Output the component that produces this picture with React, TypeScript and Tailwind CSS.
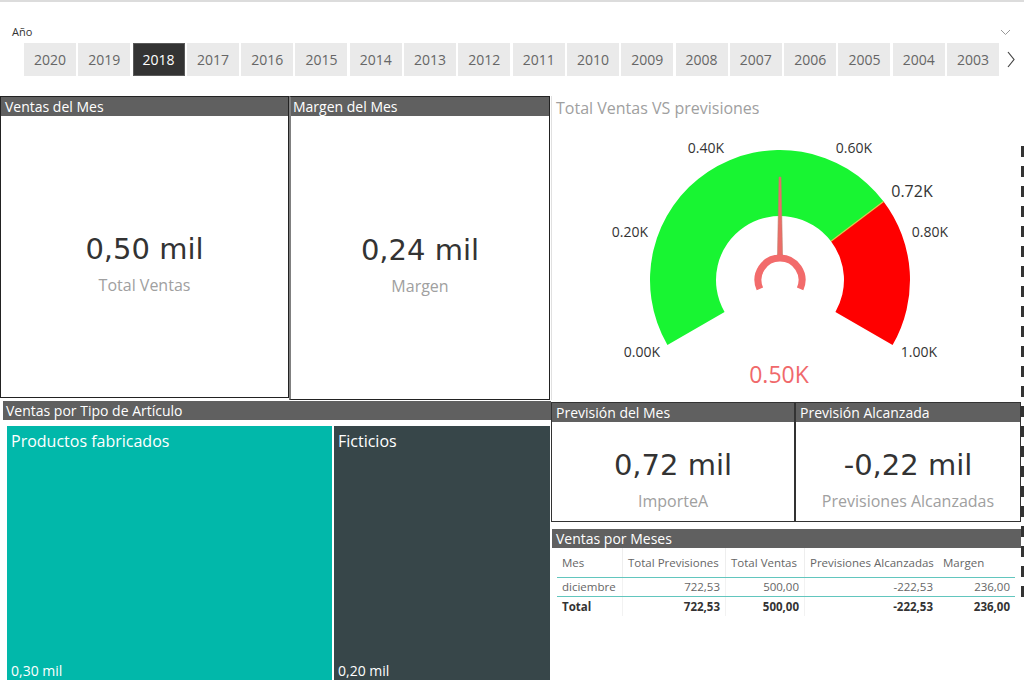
import React from 'react';

/* ─── Data ─────────────────────────────────────────────────────────────────── */
const YEARS = ['2020', '2019', '2018', '2017', '2016', '2015', '2014', '2013', '2012', '2011', '2010', '2009', '2008', '2007', '2006', '2005', '2004', '2003'];
const SELECTED = '2018';

const ROWS = [
  { mes: 'diciembre', prev: '722,53', ventas: '500,00', alc: '-222,53', margen: '236,00', bold: false },
  { mes: 'Total', prev: '722,53', ventas: '500,00', alc: '-222,53', margen: '236,00', bold: true },
];

/* ─── Gauge geometry (svg origin = page x 552, y 120) ──────────────────────── */
const GCX = 228;
const GCY = 160;
const R_OUT = 130;
const R_IN = 64;

function pt(r: number, deg: number) {
  const a = (deg * Math.PI) / 180;
  return [GCX + r * Math.sin(a), GCY - r * Math.cos(a)];
}

function band(from: number, to: number) {
  const [x1, y1] = pt(R_OUT, from);
  const [x2, y2] = pt(R_OUT, to);
  const [x3, y3] = pt(R_IN, to);
  const [x4, y4] = pt(R_IN, from);
  const large = to - from > 180 ? 1 : 0;
  return `M${x1},${y1} A${R_OUT},${R_OUT} 0 ${large} 1 ${x2},${y2} L${x3},${y3} A${R_IN},${R_IN} 0 ${large} 0 ${x4},${y4} Z`;
}

const A_MIN = -120;
const A_TARGET = -120 + 0.72 * 240;
const A_MAX = 120;

const LABELS: { t: string; x: number; y: number; s?: number }[] = [
  { t: '0.00K', x: 90, y: 237 },
  { t: '0.20K', x: 78, y: 117 },
  { t: '0.40K', x: 154, y: 33 },
  { t: '0.60K', x: 302, y: 33 },
  { t: '0.72K', x: 360, y: 77, s: 16 },
  { t: '0.80K', x: 378, y: 117 },
  { t: '1.00K', x: 367, y: 237 },
];

function Gauge() {
  const [bx1, by1] = pt(R_IN, A_TARGET);
  const [bx2, by2] = pt(R_OUT, A_TARGET);
  const [hx1, hy1] = pt(22, -114);
  const [hx2, hy2] = pt(22, 114);
  return (
    <svg width={469} height={280} className="block">
      <path d={band(A_MIN, A_TARGET)} fill="#18f532" />
      <path d={band(A_TARGET, A_MAX)} fill="#ff0000" />
      <line x1={bx1} y1={by1} x2={bx2} y2={by2} stroke="#d8c84a" strokeWidth={1.2} />
      {LABELS.map(l => (
        <text key={l.t} x={l.x} y={l.y} textAnchor="middle" fontSize={l.s ?? 14}
          fill="#333" fontFamily="'Open Sans', sans-serif">{l.t}</text>
      ))}
      {/* needle */}
      <polygon points={`${GCX - 1},57 ${GCX + 1},57 ${GCX + 2.5},135 ${GCX - 2.5},135`}
        fill="#ec6d68" stroke="#b9806a" strokeWidth={0.6} />
      {/* hub */}
      <path d={`M${hx1},${hy1} A22,22 0 1 1 ${hx2},${hy2}`} fill="none" stroke="#f26b6b" strokeWidth={7} />
      <text x={227} y={263} textAnchor="middle" fontSize={23} fill="#f0696b"
        fontFamily="'Open Sans', sans-serif">0.50K</text>
    </svg>
  );
}

/* ─── Pieces ───────────────────────────────────────────────────────────────── */
function Header({ children, pad = 'pl-[4px]' }: { children: React.ReactNode; pad?: string }) {
  return (
    <div className={`h-[19px] bg-[#606060] text-white text-[14px] leading-[19px] whitespace-nowrap ${pad}`}>
      {children}
    </div>
  );
}

function CardValue({ value, label, pt }: { value: string; label: string; pt: string }) {
  return (
    <div className={`flex flex-col items-center ${pt}`}>
      <div className="font-['DejaVu_Sans',sans-serif] text-[29px] leading-[34px] text-[#333]">{value}</div>
      <div className="mt-[8px] text-[16px] leading-[22px] text-[#a0a0a0] whitespace-nowrap">{label}</div>
    </div>
  );
}

/* ─── App ──────────────────────────────────────────────────────────────────── */
export default function App() {
  return (
    <div className="w-[1024px] h-[683px] bg-white overflow-hidden border-t-2 border-[#dcdcdc] font-['Open_Sans',sans-serif]">
      {/* ── Year slicer ── */}
      <div className="h-[94px] flex flex-col">
        <div className="flex items-center justify-between pt-[23px] pl-[12px] pr-[13px]">
          <span className="text-[11px] leading-[14px] text-[#333]">Año</span>
          <svg width="11" height="7" viewBox="0 0 11 7">
            <polyline points="1,1 5.5,5.5 10,1" fill="none" stroke="#999" strokeWidth={1} />
          </svg>
        </div>
        <div className="flex items-center mt-[4px] pl-[24px]">
          <div className="flex gap-[2.3px]">
            {YEARS.map(y => (
              <div key={y}
                className={y === SELECTED
                  ? 'w-[52px] h-[33px] flex items-center justify-center bg-[#333] border border-[#5a5a5a] text-white text-[14px]'
                  : 'w-[52px] h-[33px] flex items-center justify-center bg-[#eaeaea] text-[#666] text-[14px]'}>
                {y}
              </div>
            ))}
          </div>
          <svg width="8" height="17" viewBox="0 0 8 17" className="ml-[8px]">
            <polyline points="1,1 7,8.5 1,16" fill="none" stroke="#444" strokeWidth={1.2} />
          </svg>
        </div>
      </div>

      <div className="flex">
        <div className="w-[1021px]">
          {/* ── Row 1 ── */}
          <div className="flex h-[304px]">
            <div className="w-[289px] h-[302px] border border-[#222] flex flex-col">
              <Header>Ventas del Mes</Header>
              <CardValue value="0,50 mil" label="Total Ventas" pt="pt-[116px]" />
            </div>
            <div className="w-[261px] h-[304px] border-t border-r border-b border-[#222] border-l-2 border-l-[#808080] flex flex-col">
              <Header pad="pl-[2px]">Margen del Mes</Header>
              <CardValue value="0,24 mil" label="Margen" pt="pt-[117px]" />
            </div>
            <div className="flex-1 ml-[1px] border-l border-[#e0e0e0]">
              <div className="h-[24px] pl-[4px] pt-[2px] text-[16px] leading-[20px] text-[#a0a0a0] whitespace-nowrap">
                Total Ventas VS previsiones
              </div>
              <Gauge />
            </div>
          </div>

          {/* ── Row 2 ── */}
          <div className="flex">
            <div className="w-[551px] pl-[3px] pt-[1px]">
              <Header pad="pl-[3px]">Ventas por Tipo de Artículo</Header>
              <div className="flex gap-[2px] h-[254px] w-[543px] ml-[4px] mt-[6px]">
                <div className="w-[325px] bg-[#01b8aa] flex flex-col justify-between pl-[4px] pt-[4px] text-white">
                  <span className="text-[16px] leading-[22px]">Productos fabricados</span>
                  <span className="text-[14px] leading-[18px]">0,30 mil</span>
                </div>
                <div className="flex-1 bg-[#374649] flex flex-col justify-between pl-[4px] pt-[4px] text-white">
                  <span className="text-[16px] leading-[22px]">Ficticios</span>
                  <span className="text-[14px] leading-[18px]">0,20 mil</span>
                </div>
              </div>
            </div>

            <div className="w-[470px] pt-[2px]">
              <div className="flex">
                <div className="w-[244px] h-[120px] border border-[#333] flex flex-col">
                  <Header>Previsión del Mes</Header>
                  <CardValue value="0,72 mil" label="ImporteA" pt="pt-[26px]" />
                </div>
                <div className="w-[226px] h-[120px] border border-[#333] flex flex-col">
                  <Header>Previsión Alcanzada</Header>
                  <CardValue value="-0,22 mil" label="Previsiones Alcanzadas" pt="pt-[26px]" />
                </div>
              </div>

              <div className="mt-[7px] ml-[1px]">
                <Header>Ventas por Meses</Header>
                <div className="ml-[5px] w-[458px] text-[11.5px] text-[#666]">
                  <div className="grid grid-cols-[65px_103px_79px_134px_77px] h-[30px] items-stretch border-b-[1.5px] border-[#62c6be]">
                    <div className="px-[5px] flex items-center">Mes</div>
                    <div className="px-[5px] flex items-center border-l border-[#eeeeee] whitespace-nowrap">Total Previsiones</div>
                    <div className="px-[5px] flex items-center border-l border-[#eeeeee] whitespace-nowrap">Total Ventas</div>
                    <div className="px-[5px] flex items-center border-l border-[#eeeeee] whitespace-nowrap">Previsiones Alcanzadas</div>
                    <div className="px-[5px] flex items-center whitespace-nowrap">Margen</div>
                  </div>
                  {ROWS.map(r => (
                    <div key={r.mes}
                      className={r.bold
                        ? 'grid grid-cols-[65px_103px_79px_134px_77px] h-[19px] font-bold text-[#333]'
                        : 'grid grid-cols-[65px_103px_79px_134px_77px] h-[19px] border-b-[1.5px] border-[#62c6be]'}>
                      <div className="px-[5px] flex items-center">{r.mes}</div>
                      <div className="px-[5px] flex items-center justify-end border-l border-[#f2f2f2]">{r.prev}</div>
                      <div className="px-[5px] flex items-center justify-end border-l border-[#f2f2f2]">{r.ventas}</div>
                      <div className="px-[5px] flex items-center justify-end border-l border-[#f2f2f2]">{r.alc}</div>
                      <div className="px-[5px] flex items-center justify-end">{r.margen}</div>
                    </div>
                  ))}
                </div>
              </div>
            </div>
          </div>
        </div>

        {/* ── clipped scroll marks at right edge ── */}
        <div className="w-[3px] pt-[50px] flex flex-col gap-[9px]">
          {Array.from({ length: 23 }, (_, i) => (
            <div key={i} className="w-[3px] h-[11px] bg-[#333]" />
          ))}
        </div>
      </div>
    </div>
  );
}
